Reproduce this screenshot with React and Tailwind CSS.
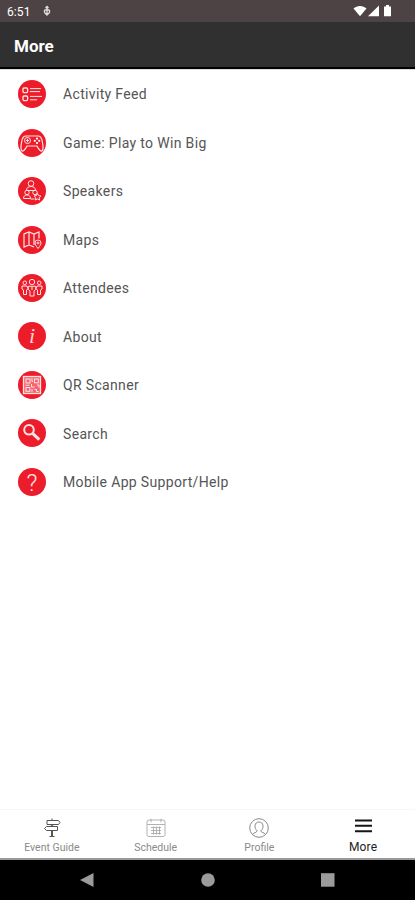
import React from "react";

const FeedIcon = () => (
  <>
    <rect x="5" y="8" width="4.6" height="4.6" rx="1" strokeWidth="1.3" />
    <rect x="5" y="16" width="4.6" height="4.6" rx="1" strokeWidth="1.3" />
    <path d="M12 8.6h11M12 11.6h10M12 16.4h12M12 19.8h7" />
  </>
);

const GameIcon = () => (
  <>
    <path
      strokeWidth="1.2"
      d="M8 7h12c2.5 0 3.6 2 4.2 5 .7 3.500 1.300 8 .2 9.500-1.400 1.500-3.400-.5-5.400-4.500h-10c-2 4-4 6-5.400 4.500-1.100-1.500-.5-6 .2-9.500 .6-3 1.700-5 4.200-5z"
    />
    <circle cx="9.5" cy="11.5" r="3" />
    <path d="M9.5 9.8v3.4M7.8 11.5h3.4" />
    <g fill="white" stroke="none">
      <circle cx="19" cy="9.6" r="1.1" />
      <circle cx="19" cy="14" r="1.1" />
      <circle cx="16.8" cy="11.8" r="1.1" />
      <circle cx="21.2" cy="11.8" r="1.1" />
    </g>
  </>
);

const SpeakersIcon = () => (
  <>
    <circle cx="13" cy="6.5" r="2.8" />
    <path d="M8.500 13.500c0-3 2-4 4.500-4s4.500 1 4.500 4z" />
    <circle cx="9" cy="15.5" r="2.2" />
    <path d="M5.500 21.500c0-2.500 1.500-3.500 3.500-3.500s3.500 1 3.500 3.500z" />
    <circle cx="17" cy="15.5" r="2.2" />
    <path d="M12.500 22h4" />
    <path d="M19.500 16.500l1.100 2.100 2.300.4-1.700 1.700.4 2.300-2.100-1.100-2.100 1.100.4-2.300-1.700-1.700 2.300-.4z" />
  </>
);

const MapsIcon = () => (
  <>
    <path
      strokeWidth="1.2"
      d="M16 21l-5-2-5 2V8l5-2 5 2 5-2v6.500M11 6v13M16 8v11"
    />
    <path d="M20 22.500c-2-2.600-3-4-3-5.500a3 3 0 0 1 6 0c0 1.500-1 2.900-3 5.500z" />
    <circle cx="20" cy="17" r="1" />
  </>
);

const AttendeesIcon = () => (
  <>
    <circle cx="6.8" cy="8.8" r="1.8" />
    <circle cx="21.2" cy="8.8" r="1.8" />
    <circle cx="14" cy="8" r="2.7" />
    <path d="M5.500 20.500v-4.500l-1.500-1v-3h5l1.200 3-1.700 1v4.500zM22.500 20.500v-4.500l1.500-1v-3h-5l-1.200 3 1.700 1v4.500z" />
    <path d="M12 22v-5l-1.700-1.500v-3.200h7.400v3.200L16 17v5zM14 12.500v3.500" />
  </>
);

const QrIcon = () => (
  <>
    <rect x="5.5" y="5.5" width="17" height="17" strokeWidth="1.3" fill="#f4666f" />
    <rect x="8" y="8" width="4" height="4" />
    <rect x="16.5" y="8" width="3.8" height="3.8" />
    <rect x="8" y="16.5" width="3.8" height="3.8" />
    <path d="M14 7v3.500h1M7.500 14.200h4M13.500 13v3h3M14 18v3M16.500 18.500h2v2h2M19 14h2v2.500" />
  </>
);

const SearchIcon = () => (
  <>
    <circle cx="11" cy="10.8" r="4.8" strokeWidth="2" />
    <path d="M14.800 14.700l6.500 6" strokeWidth="3" />
  </>
);

const AboutIcon = () => (
  <text
    x="14"
    y="21"
    textAnchor="middle"
    className="fill-[#ffd0d0] stroke-none font-['Liberation_Serif',serif] text-[22px] italic"
  >
    i
  </text>
);

const HelpIcon = () => (
  <text
    x="14"
    y="22.5"
    textAnchor="middle"
    className="fill-[#ffe4e4] stroke-none font-[Roboto,sans-serif] text-[24px] font-light"
  >
    ?
  </text>
);

const menuItems = [
  { label: "Activity Feed", icon: FeedIcon },
  { label: "Game: Play to Win Big", icon: GameIcon },
  { label: "Speakers", icon: SpeakersIcon },
  { label: "Maps", icon: MapsIcon },
  { label: "Attendees", icon: AttendeesIcon },
  { label: "About", icon: AboutIcon },
  { label: "QR Scanner", icon: QrIcon },
  { label: "Search", icon: SearchIcon },
  { label: "Mobile App Support/Help", icon: HelpIcon },
];

const SignpostIcon = () => (
  <svg viewBox="0 0 20 20" className="size-5" fill="none" stroke="#555" strokeWidth="1">
    <path d="M5 2.500h11.500l1.500 2-1.500 2H5zM15.500 8.500h-11l-2 2 2 2h11zM10 .5v2M9.300 6.500v2M10.700 6.500v2M7.500 18.500h5" />
    <path d="M10 12.500v6" strokeWidth="2" />
  </svg>
);

const CalendarIcon = () => (
  <svg viewBox="0 0 20 20" className="size-5" fill="none" stroke="#aaa" strokeWidth=".9">
    <rect x="1" y="2" width="18" height="16.5" rx="2" />
    <path d="M1 6.500h18M5 .8v3.500M15 .8v3.500M5 9.500h10M5 12.500h10M5 15.500h10M7.500 8.500v8M10.500 8.500v8M13.500 8.500v8" />
  </svg>
);

const ProfileIcon = () => (
  <svg viewBox="0 0 20 20" className="size-5" fill="none" stroke="#888" strokeWidth="1">
    <circle cx="10" cy="10" r="9.3" />
    <path d="M3.500 16.500c.8-2 4.500-1.700 4.700-3.700-1.700-1.300-2.400-3.300-2.200-5 .2-2.500 1.800-3.800 4-3.800s3.800 1.300 4 3.800c.2 1.700-.5 3.700-2.200 5 .2 2 3.900 1.700 4.700 3.700" />
  </svg>
);

const BarsIcon = () => (
  <svg viewBox="0 0 20 20" className="size-5" fill="none" stroke="#151515" strokeWidth="2">
    <path d="M2 2.500h17M2 7.800h17M2 13.200h17" />
  </svg>
);

const tabs = [
  { label: "Event Guide", icon: SignpostIcon },
  { label: "Schedule", icon: CalendarIcon },
  { label: "Profile", icon: ProfileIcon },
  { label: "More", icon: BarsIcon, active: true },
];

const StatusBar = () => (
  <div className="flex h-[22px] items-center bg-[#4e4344] pl-[7px] pr-[22px] text-white">
    <span className="pt-px text-[12px] leading-none tracking-[0.1px]">6:51</span>
    <svg viewBox="0 0 8 12" className="ml-[12px] h-3 w-2" fill="none" stroke="#ddd" strokeWidth="1.3">
      <path d="M4 1v9M2.500 3L4 1.500 5.500 3M1.500 5h5M1.500 5v2.500L4 10l2.500-2.500V5" />
    </svg>
    <svg viewBox="0 0 40 14" className="ml-auto h-[14px] w-[40px]" fill="white">
      <path d="M.5 4.500C4 1 10 1 13.500 4.500L7 12.300z" />
      <path d="M26 1.500v10.800H15z" />
      <path d="M31 2.500h2V1h3v1.500h2v9.800h-7z" />
    </svg>
  </div>
);

const MenuRow = ({ label, icon: Icon }) => (
  <li className="flex h-[48.45px] items-center pl-[17.5px]">
    <span className="size-7 rounded-full bg-[#ed1c2a]">
      <svg viewBox="0 0 28 28" className="size-7" fill="none" stroke="#ffe4e4" strokeWidth="1">
        <Icon />
      </svg>
    </span>
    <span className="ml-[17.5px] pt-[0.5px] text-[14px] leading-5 tracking-[0.34px] text-[#555]">{label}</span>
  </li>
);

const TabBar = () => (
  <nav className="flex h-[51px] border-t border-[#f7f7f7] border-b-2 border-b-[#999] bg-white">
    {tabs.map(({ label, icon: Icon, active }) => (
      <div key={label} className="flex flex-1 flex-col items-center pt-[8px]">
        <Icon />
        <span
          className={
            active
              ? "mt-[2px] text-[12px] leading-[14px] tracking-[0.2px] text-[#222]"
              : "mt-[2px] text-[10.5px] leading-[15px] text-[#8a8a8a]"
          }
        >
          {label}
        </span>
      </div>
    ))}
  </nav>
);

const NavButtons = () => (
  <div className="flex h-10 items-center bg-black px-[80px]">
    <svg viewBox="0 0 255 16" className="h-4 w-[255px]" fill="#9b9b9b">
      <path d="M0 8L13.500 1v14z" />
      <circle cx="128" cy="8" r="6.8" />
      <rect x="241" y="1.2" width="13.5" height="13.5" />
    </svg>
  </div>
);

export default function App() {
  return (
    <div className="flex h-[900px] w-[415px] flex-col overflow-hidden bg-white font-[Roboto,sans-serif]">
      <StatusBar />
      <header className="flex h-[47px] items-center border-b-2 border-black bg-[#303030] pl-[14px]">
        <h1 className="pt-[3px] text-[17px] font-bold leading-none text-white">More</h1>
      </header>
      <main className="flex-1 border-t border-[#ddd]">
        <ul>
          {menuItems.map((item) => (
            <MenuRow key={item.label} {...item} />
          ))}
        </ul>
      </main>
      <TabBar />
      <NavButtons />
    </div>
  );
}
